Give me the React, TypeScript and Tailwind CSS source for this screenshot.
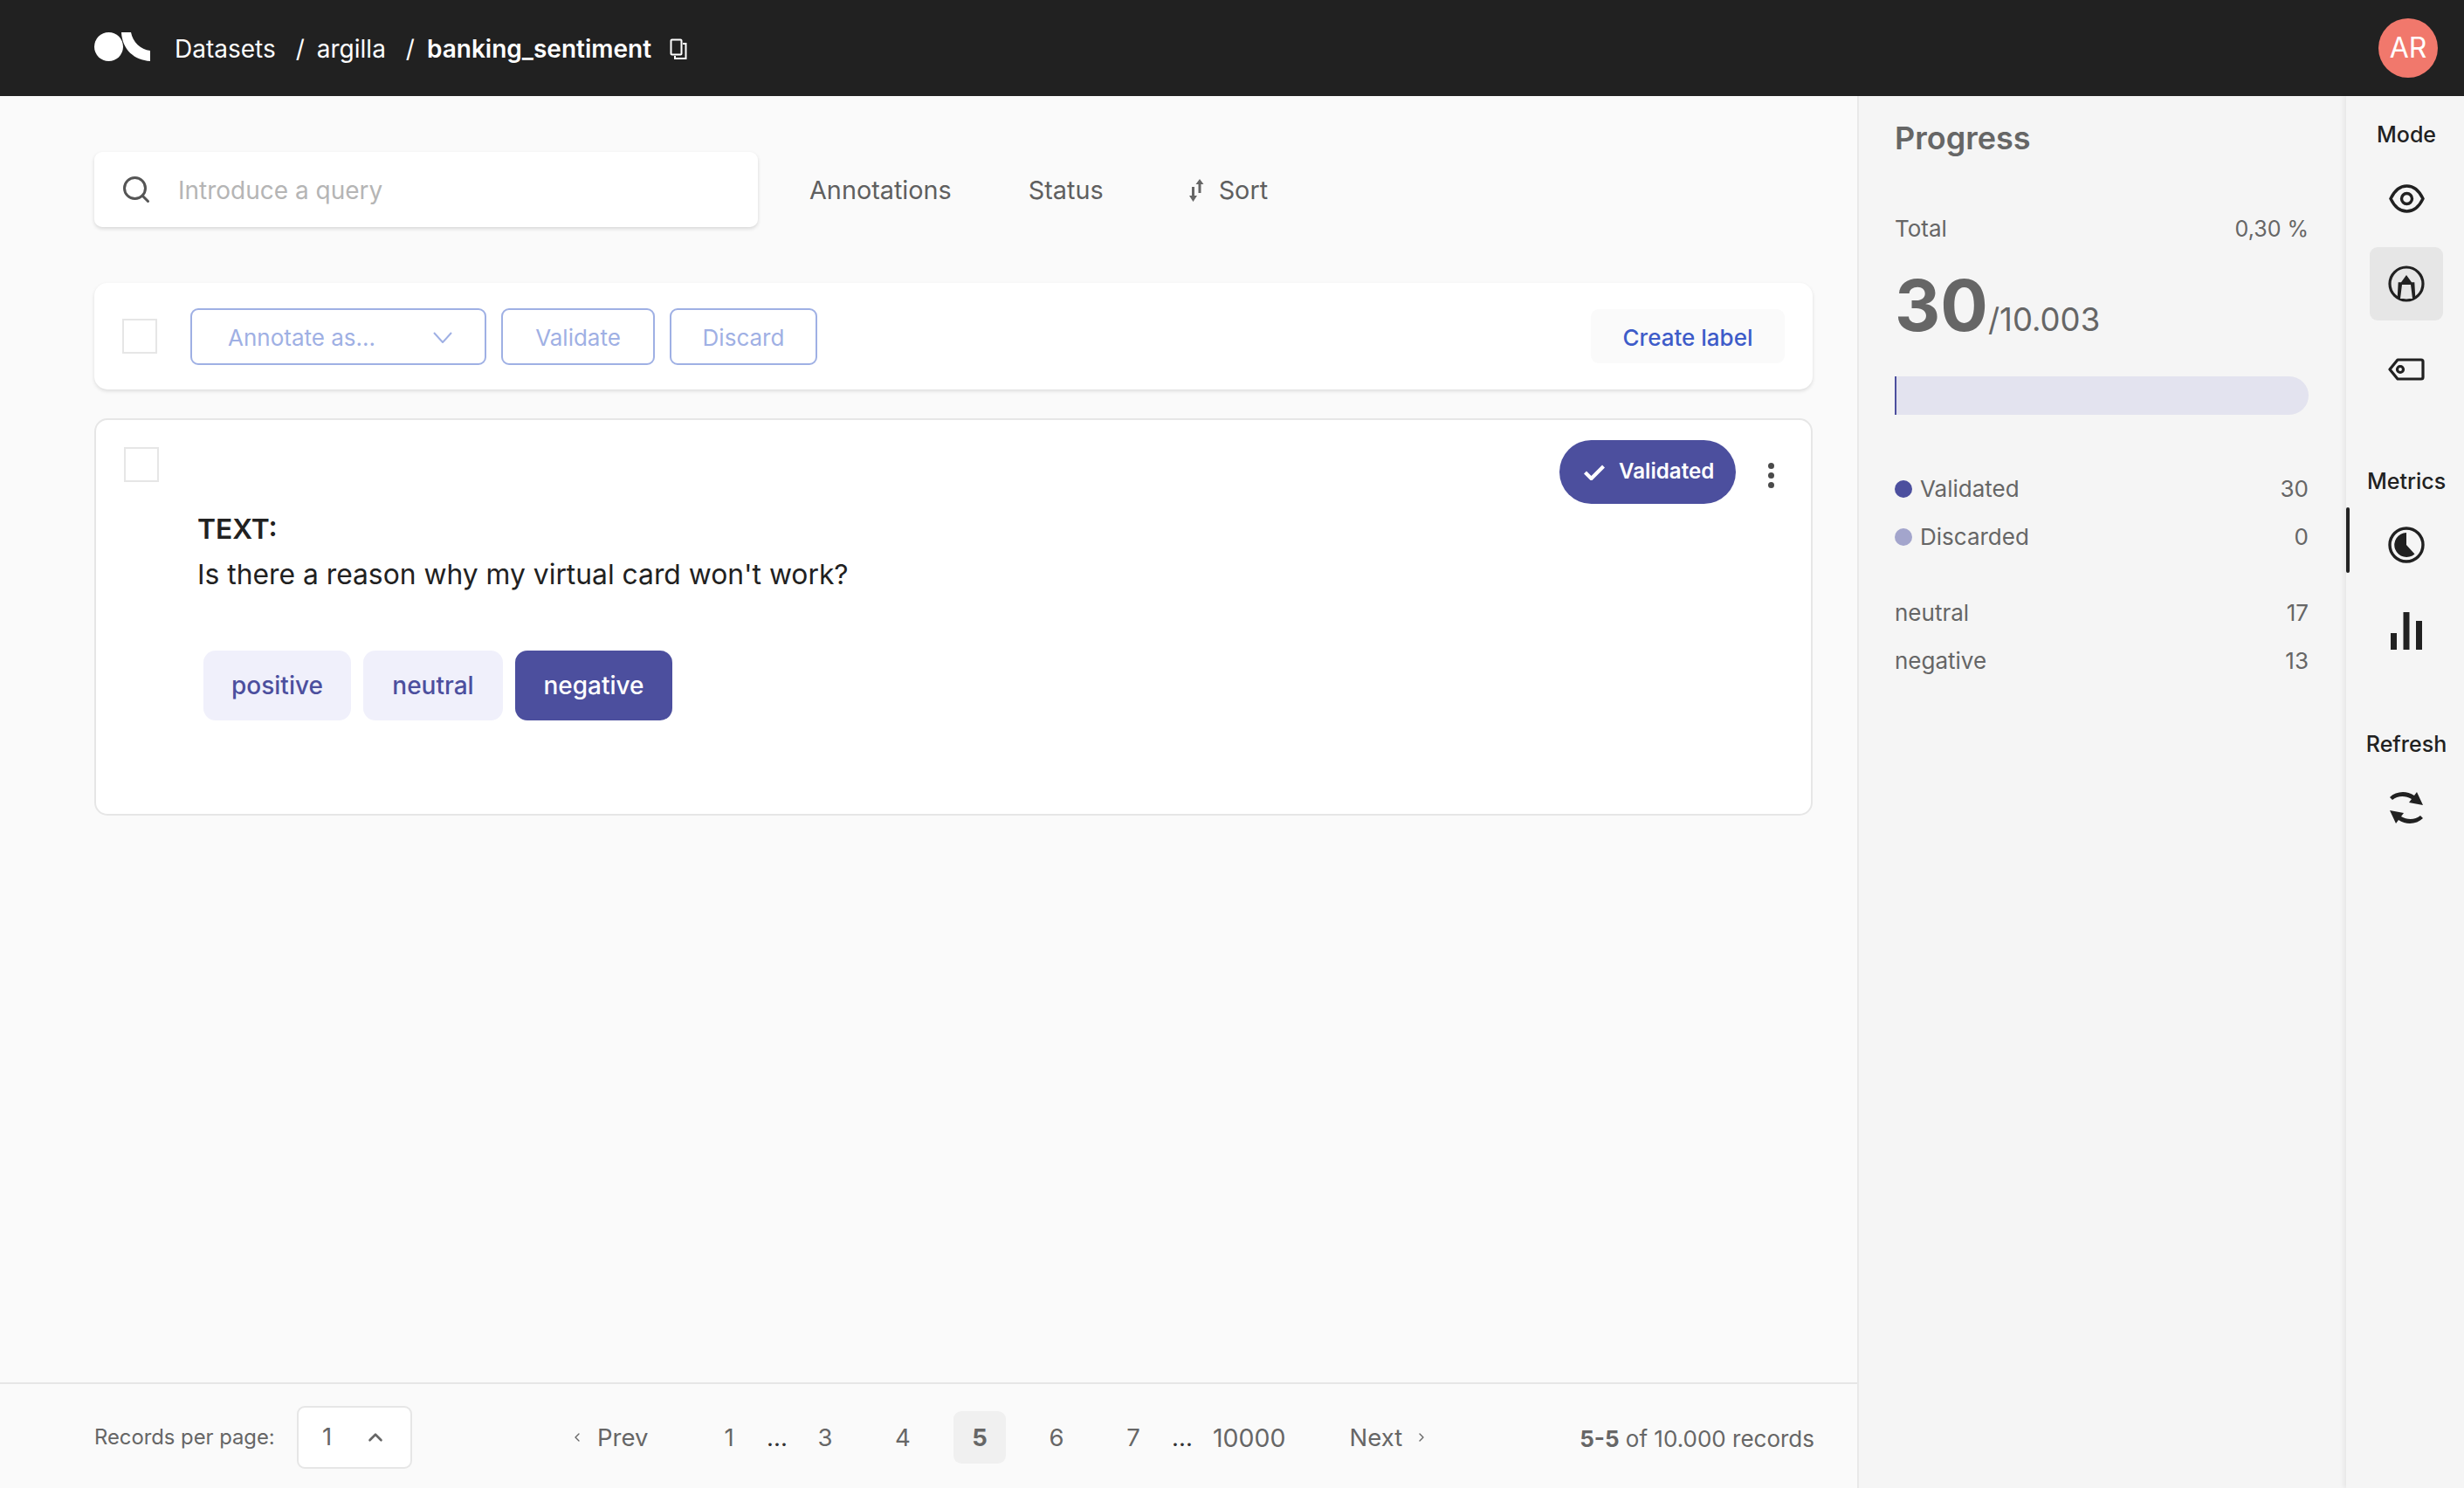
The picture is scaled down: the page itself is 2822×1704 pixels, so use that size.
import { ChevronLeft, ChevronRight, ChevronUp, Search } from "lucide-react";

function Logo() {
  return (
    <svg width="64" height="33" viewBox="0 0 64 33" fill="#fff" className="-mt-[3px]">
      <circle cx="16.500" cy="16.500" r="16.500" />
      <path d="M31 0h11c2 11 11 20 22 21v12C46 32 32 20 31 0z" />
    </svg>
  );
}

function CopyIcon() {
  return (
    <svg width="20" height="24" viewBox="0 0 20 24" fill="none" stroke="#fff" strokeWidth="2">
      <rect x="1.500" y="1.500" width="12" height="17" rx="1" />
      <path d="M15 6h3.500v17H6v-3" />
    </svg>
  );
}

function SortIcon() {
  return (
    <svg width="17" height="26" viewBox="0 0 17 26" fill="#666">
      <path d="M3 9h3v11H3zM10.500 6h3v10h-3z" />
      <path d="M0 19h9l-4.500 7zM7.500 6h9L12 0z" />
    </svg>
  );
}

function EyeIcon() {
  return (
    <svg width="41" height="33" viewBox="0 0 41 33" fill="none" stroke="#212121" strokeWidth="3.400">
      <path d="M2 16.500C7 6 13 2 20.500 2S34 6 39 16.500C34 27 28 31 20.500 31S7 27 2 16.500z" />
      <circle cx="20.500" cy="16.500" r="6" />
    </svg>
  );
}

function AnnotateIcon() {
  return (
    <svg width="42" height="42" viewBox="0 0 42 42" fill="none">
      <circle cx="21" cy="21" r="19" stroke="#212121" strokeWidth="3.200" />
      <path d="M21 11l6 8.300h3.300l1 18H10.700l1-18H15z" fill="#212121" />
      <path d="M16 22h10l2 16H14z" fill="#e6e6e6" />
    </svg>
  );
}

function TagIcon() {
  return (
    <svg width="42" height="26" viewBox="0 0 42 26" fill="none" stroke="#212121" strokeWidth="3.200">
      <path d="M11 2h27a2 2 0 0 1 2 2v18a2 2 0 0 1-2 2H11L2 13z" strokeLinejoin="round" />
      <circle cx="14" cy="13" r="3.500" />
    </svg>
  );
}

function MetricsIcon() {
  return (
    <svg width="42" height="42" viewBox="0 0 42 42">
      <circle cx="21" cy="21" r="19" fill="none" stroke="#212121" strokeWidth="3.400" />
      <path d="M21 7v14l9.500 10.500A14 14 0 1 1 21 7z" fill="#212121" />
    </svg>
  );
}

function BarsIcon() {
  return (
    <svg width="36" height="43" viewBox="0 0 36 43" fill="#212121">
      <path d="M0 24h7v19H0zM14.500 0h7v43h-7zM29 10h7v33h-7z" />
    </svg>
  );
}

function RefreshIcon() {
  return (
    <svg width="40" height="42" viewBox="0 0 40 42" fill="#212121">
      <path d="M1 9C8 2 20 1 29 7l3-4 7 15-16-3 3-4C19 7 10 7 4 12z" />
      <path d="M39 33c-7 7-19 8-28 2l-3 4-7-15 16 3-3 4c7 4 16 4 22-1z" />
    </svg>
  );
}

function Checkbox() {
  return <div className="h-[40px] w-[40px] shrink-0 border-2 border-[#e6e6e6] bg-white" />;
}

function OutlineButton({ children, className }: { children: React.ReactNode; className: string }) {
  return (
    <div className={`flex h-[65px] items-center rounded-[9px] border-2 border-[#9fb0e4] pt-[2px] text-[26px] text-[#9fb0e4] ${className}`}>
      {children}
    </div>
  );
}

function StatRow({ label, value, dot }: { label: string; value: string; dot?: string }) {
  return (
    <div className="flex h-[55px] items-center justify-between text-[26px] text-[#666666]">
      <div className="flex items-center">
        {dot ? <span className={`mr-[9px] h-[20px] w-[20px] rounded-full ${dot}`} /> : null}
        {label}
      </div>
      <div>{value}</div>
    </div>
  );
}

function PageNum({ children, className }: { children: React.ReactNode; className: string }) {
  return <div className={`pt-[3px] text-center ${className}`}>{children}</div>;
}

export default function App() {
  return (
    <div className="flex h-[1704px] w-[2822px] flex-col overflow-hidden bg-[#fafafa] font-['Inter',sans-serif]">
      <header className="flex h-[110px] shrink-0 items-center justify-between bg-[#212121] pl-[108px] pr-[30px] text-white">
        <div className="flex items-center text-[28px]">
          <Logo />
          <div className="ml-[28px] mt-[2px] flex items-center">
            <span>Datasets</span>
            <span className="ml-[23px]">/</span>
            <span className="ml-[14px]">argilla</span>
            <span className="ml-[23px]">/</span>
            <span className="ml-[14px] font-semibold">banking_sentiment</span>
            <span className="ml-[21px] flex">
              <CopyIcon />
            </span>
          </div>
        </div>
        <div className="flex h-[68px] w-[68px] items-center justify-center rounded-full bg-[#f1786c] text-[32px]">AR</div>
      </header>

      <div className="flex min-h-0 flex-1">
        <main className="flex w-[2127px] shrink-0 flex-col">
          <div className="flex-1 pl-[108px] pr-[51px] pt-[64px]">
            <div className="flex h-[86px] items-center text-[28.800px] text-[#5f5f5f]">
              <div className="flex h-full w-[760px] items-center rounded-[9px] bg-white pl-[30px] shadow-[0_2px_4px_rgba(0,0,0,0.14)]">
                <Search size={36} strokeWidth={2} color="#555" />
                <span className="ml-[30px] mt-[2px] text-[28px] text-[#b5b5b5]">Introduce a query</span>
              </div>
              <span className="ml-[59px] mt-[1px]">Annotations</span>
              <span className="ml-[88px] mt-[1px]">Status</span>
              <span className="ml-[98px] mt-[1px] flex items-center gap-[17px]">
                <SortIcon />
                Sort
              </span>
            </div>

            <div className="mt-[64px] flex h-[122px] items-center rounded-[15px] bg-white pl-[32px] pr-[32px] shadow-[0_2px_4px_rgba(0,0,0,0.12)]">
              <Checkbox />
              <OutlineButton className="ml-[38px] w-[339px] justify-between pl-[41px] pr-[37px]">
                Annotate as...
                <svg width="22" height="13" viewBox="0 0 22 13" fill="none" stroke="#9fb0e4" strokeWidth="2">
                  <path d="M1 1l10 11L21 1" />
                </svg>
              </OutlineButton>
              <OutlineButton className="ml-[17px] w-[176px] justify-center">Validate</OutlineButton>
              <OutlineButton className="ml-[17px] w-[169px] justify-center">Discard</OutlineButton>
              <div className="ml-auto flex h-[62px] w-[222px] items-center justify-center rounded-[9px] bg-[#fafafa] pt-[2px] text-[26px] font-medium text-[#3e5cc9]">
                Create label
              </div>
            </div>

            <div className="mt-[33px] h-[455px] rounded-[15px] border-2 border-[#e6e6e6] bg-white">
              <div className="flex items-start pl-[32px] pr-[42px] pt-[23px]">
                <div className="mt-[8px]">
                  <Checkbox />
                </div>
                <div className="ml-auto flex h-[73px] w-[202px] items-center gap-[16px] rounded-full bg-[#4c4f9e] pl-[28px] text-[24.200px] font-semibold text-white">
                  <svg width="24" height="18" viewBox="0 0 24 18" fill="none" stroke="#fff" strokeWidth="4.200">
                    <path d="M1.500 9l7 7L22.500 2" />
                  </svg>
                  Validated
                </div>
                <div className="ml-[37px] mt-[26px] flex flex-col gap-[4px]">
                  <span className="h-[7px] w-[7px] rounded-full bg-[#4a4a4a]" />
                  <span className="h-[7px] w-[7px] rounded-full bg-[#4a4a4a]" />
                  <span className="h-[7px] w-[7px] rounded-full bg-[#4a4a4a]" />
                </div>
              </div>
              <div className="mt-[3px] pl-[116px] text-[#212121]">
                <div className="text-[31.800px] font-semibold leading-[52px]">TEXT:</div>
                <div className="text-[31.800px] leading-[52px]">Is there a reason why my virtual card won't work?</div>
              </div>
              <div className="mt-[61px] flex gap-[14px] pl-[123px] text-[28px] font-medium">
                <div className="flex h-[80px] w-[169px] items-center justify-center rounded-[14px] bg-[#f0f0fb] text-[#4c4f9e]">positive</div>
                <div className="flex h-[80px] w-[160px] items-center justify-center rounded-[14px] bg-[#f0f0fb] text-[#4c4f9e]">neutral</div>
                <div className="flex h-[80px] w-[180px] items-center justify-center rounded-[14px] bg-[#4c4f9e] text-white">negative</div>
              </div>
            </div>
          </div>

          <footer className="flex h-[121px] shrink-0 items-center border-t-2 border-[#e6e6e6] pl-[108px] pt-[2px] text-[27.500px] text-[#666666]">
            <span className="w-[232px] text-[23.800px]">Records per page:</span>
            <div className="flex h-[72px] w-[132px] items-center justify-between rounded-[9px] border-2 border-[#e6e6e6] bg-white pl-[27px] pr-[27px]">
              1
              <ChevronUp size={26} strokeWidth={2.400} />
            </div>
            <div className="ml-[181px] flex w-[90px] items-center">
              <ChevronLeft size={16} strokeWidth={2} />
              <span className="ml-[15px] pt-[3px]">Prev</span>
            </div>
            <PageNum className="ml-[82px] w-[20px]">1</PageNum>
            <PageNum className="ml-[30px] w-[30px] text-[#333]">...</PageNum>
            <PageNum className="ml-[28px] w-[24px]">3</PageNum>
            <PageNum className="ml-[65px] w-[24px]">4</PageNum>
            <div className="ml-[46px] flex h-[60px] w-[60px] items-center justify-center rounded-[9px] bg-[#f0f0f0] pt-[3px] font-bold">5</div>
            <PageNum className="ml-[46px] w-[24px]">6</PageNum>
            <PageNum className="ml-[64px] w-[24px]">7</PageNum>
            <PageNum className="ml-[29px] w-[30px] text-[#333]">...</PageNum>
            <span className="ml-[20px] pt-[3px] text-[28.500px]">10000</span>
            <div className="ml-[73px] flex items-center">
              <span className="pt-[3px]">Next</span>
              <ChevronRight size={16} strokeWidth={2} className="ml-[14px]" />
            </div>
            <div className="ml-auto mr-[49px] pt-[3px] text-[26px]">
              <span className="font-bold">5-5</span> of 10.000 records
            </div>
          </footer>
        </main>

        <aside className="flex w-[560px] shrink-0 flex-col border-l-2 border-[#e9e9e9] bg-[#f5f5f5] pl-[41px] pr-[43px] pt-[24px] text-[#666666]">
          <h2 className="text-[36px] font-semibold leading-[48px]">Progress</h2>
          <div className="mt-[63px] flex justify-between text-[26px] leading-[34px]">
            <span>Total</span>
            <span className="text-[25px]">0,30 %</span>
          </div>
          <div className="mt-[25px] flex items-baseline">
            <span className="text-[81px] font-bold leading-[92px]">30</span>
            <span className="text-[36.500px]">/10.003</span>
          </div>
          <div className="mt-[35px] h-[44px] w-full overflow-hidden rounded-r-[22px] bg-[#e3e3ef]">
            <div className="h-full w-[2px] bg-[#4c4f9e]" />
          </div>
          <div className="mt-[57px]">
            <StatRow label="Validated" value="30" dot="bg-[#4c4f9e]" />
            <StatRow label="Discarded" value="0" dot="bg-[#a3a5cc]" />
          </div>
          <div className="mt-[32px]">
            <StatRow label="neutral" value="17" />
            <StatRow label="negative" value="13" />
          </div>
        </aside>

        <nav className="flex w-[135px] shrink-0 flex-col items-center bg-[#f5f5f5] pl-[3px] pt-[31px] text-[25px] font-medium text-[#212121] shadow-[-3px_0_5px_rgba(0,0,0,0.06)]">
          <div className="leading-[26px]">Mode</div>
          <div className="mt-[44px] flex h-[33px] items-center">
            <EyeIcon />
          </div>
          <div className="mt-[39px] flex h-[84px] w-[84px] items-center justify-center rounded-[9px] bg-[#e6e6e6]">
            <AnnotateIcon />
          </div>
          <div className="mt-[43px] flex h-[26px] items-center">
            <TagIcon />
          </div>
          <div className="mt-[102px] leading-[26px]">Metrics</div>
          <div className="relative mt-[17px] flex h-[75px] w-full items-center justify-center pt-[11px]">
            <span className="absolute left-[-3px] top-0 h-full w-[4px] rounded-full bg-[#212121]" />
            <MetricsIcon />
          </div>
          <div className="mt-[45px] flex">
            <BarsIcon />
          </div>
          <div className="mt-[95px] leading-[26px]">Refresh</div>
          <div className="mt-[39px] flex">
            <RefreshIcon />
          </div>
        </nav>
      </div>
    </div>
  );
}
